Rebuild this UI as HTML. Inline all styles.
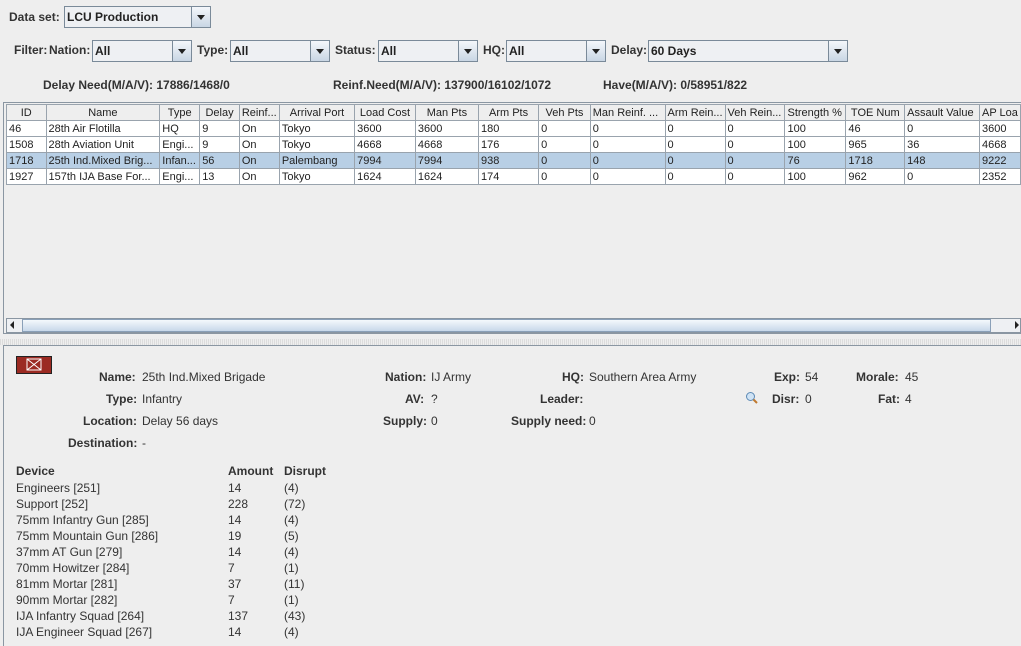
<!DOCTYPE html>
<html><head><meta charset="utf-8"><style>
*{margin:0;padding:0;box-sizing:border-box}
body{width:1021px;height:646px;background:#eeeeee;font-family:"Liberation Sans",sans-serif;position:relative;overflow:hidden;color:#222}
.a{position:absolute;white-space:nowrap}
.b{font-weight:bold;font-size:12px;color:#333}
.n{font-size:12px;color:#333}
.combo{position:absolute;height:22px;border:1px solid #7a8a99;background:#eef0f3;font-weight:bold;font-size:12px;padding:3px 0 0 2px;color:#222}
.combo .btn{position:absolute;right:0;top:0;width:19px;height:20px;border-left:1px solid #7a8a99;background:linear-gradient(#f4f7fb,#c9d6e4)}
.combo .btn:after{content:"";position:absolute;left:5px;top:8px;border-left:4px solid transparent;border-right:4px solid transparent;border-top:5px solid #222}
table{position:absolute;left:6px;top:104px;border-collapse:collapse;font-size:11px;table-layout:fixed}
td,th{border:1px solid #99a3ad;height:16px;padding:0 2px;overflow:hidden;white-space:nowrap;font-weight:normal;color:#222}
th{background:#eeeeee;text-align:center}
td{background:#fff}
tr.s td{background:#b8cfe5}
</style></head><body>
<div class="a b" style="left:9px;top:10px">Data set:</div>
<div class="combo" style="left:64px;top:6px;width:147px">LCU Production<div class="btn"></div></div>
<div class="a b" style="left:14px;top:43px">Filter:</div>
<div class="a b" style="left:49px;top:43px">Nation:</div>
<div class="combo" style="left:92px;top:40px;width:100px">All<div class="btn"></div></div>
<div class="a b" style="left:197px;top:43px">Type:</div>
<div class="combo" style="left:230px;top:40px;width:100px">All<div class="btn"></div></div>
<div class="a b" style="left:335px;top:43px">Status:</div>
<div class="combo" style="left:378px;top:40px;width:100px">All<div class="btn"></div></div>
<div class="a b" style="left:483px;top:43px">HQ:</div>
<div class="combo" style="left:506px;top:40px;width:100px">All<div class="btn"></div></div>
<div class="a b" style="left:611px;top:43px">Delay:</div>
<div class="combo" style="left:648px;top:40px;width:200px">60 Days<div class="btn"></div></div>
<div class="a b" style="left:43px;top:78px">Delay Need(M/A/V): 17886/1468/0</div>
<div class="a b" style="left:333px;top:78px">Reinf.Need(M/A/V): 137900/16102/1072</div>
<div class="a b" style="left:603px;top:78px">Have(M/A/V): 0/58951/822</div>
<div class="a" style="left:3px;top:102px;width:1018px;height:232px;border:1px solid #8a96a2;border-right:none"></div>
<table>
<colgroup><col style="width:40px"><col style="width:114px"><col style="width:40px"><col style="width:40px"><col style="width:40px"><col style="width:76px"><col style="width:61px"><col style="width:64px"><col style="width:61px"><col style="width:52px"><col style="width:75px"><col style="width:60px"><col style="width:60px"><col style="width:61px"><col style="width:59px"><col style="width:75px"><col style="width:40px"></colgroup>
<tr><th>ID</th><th>Name</th><th>Type</th><th>Delay</th><th style="text-align:left">Reinf...</th><th>Arrival Port</th><th>Load Cost</th><th>Man Pts</th><th>Arm Pts</th><th>Veh Pts</th><th style="text-align:left">Man Reinf. ...</th><th style="text-align:left">Arm Rein...</th><th style="text-align:left">Veh Rein...</th><th style="text-align:left">Strength %</th><th>TOE Num</th><th style="text-align:left">Assault Value</th><th style="text-align:left">AP Loa</th></tr>
<tr><td>46</td><td>28th Air Flotilla</td><td>HQ</td><td>9</td><td>On</td><td>Tokyo</td><td>3600</td><td>3600</td><td>180</td><td>0</td><td>0</td><td>0</td><td>0</td><td>100</td><td>46</td><td>0</td><td>3600</td></tr>
<tr><td>1508</td><td>28th Aviation Unit</td><td>Engi...</td><td>9</td><td>On</td><td>Tokyo</td><td>4668</td><td>4668</td><td>176</td><td>0</td><td>0</td><td>0</td><td>0</td><td>100</td><td>965</td><td>36</td><td>4668</td></tr>
<tr class="s"><td>1718</td><td>25th Ind.Mixed Brig...</td><td>Infan...</td><td>56</td><td>On</td><td>Palembang</td><td>7994</td><td>7994</td><td>938</td><td>0</td><td>0</td><td>0</td><td>0</td><td>76</td><td>1718</td><td>148</td><td>9222</td></tr>
<tr><td>1927</td><td>157th IJA Base For...</td><td>Engi...</td><td>13</td><td>On</td><td>Tokyo</td><td>1624</td><td>1624</td><td>174</td><td>0</td><td>0</td><td>0</td><td>0</td><td>100</td><td>962</td><td>0</td><td>2352</td></tr>
</table>
<div class="a" style="left:6px;top:318px;width:1015px;height:15px;border:1px solid #8a96a2;background:#eef0f3"></div>
<div class="a" style="left:22px;top:319px;width:969px;height:13px;border:1px solid #8aa0b8;background:linear-gradient(#f4f8fc,#c8d8ea)"></div>
<div class="a" style="left:10px;top:321px;border-top:4px solid transparent;border-bottom:4px solid transparent;border-right:4px solid #222"></div>
<div class="a" style="left:1015px;top:321px;border-top:4px solid transparent;border-bottom:4px solid transparent;border-left:4px solid #222"></div>
<div class="a" style="left:0;top:339px;width:1021px;height:6px;background:repeating-linear-gradient(90deg,#dcdcdc 0 1px,#eeeeee 1px 2px)"></div>
<div class="a" style="left:3px;top:345px;width:1018px;height:301px;border-left:1px solid #8a96a2;border-top:1px solid #8a96a2"></div>
<svg class="a" style="left:16px;top:356px" width="36" height="18"><rect x="0.5" y="0.5" width="35" height="17" fill="#9b2a22" stroke="#222"/><rect x="11" y="3" width="14" height="11" fill="none" stroke="#fff"/><path d="M11 3L25 14M25 3L11 14" stroke="#fff"/></svg>
<div class="a b" style="left:99px;top:370px">Name:</div><div class="a n" style="left:142px;top:370px">25th Ind.Mixed Brigade</div>
<div class="a b" style="left:106px;top:392px">Type:</div><div class="a n" style="left:142px;top:392px">Infantry</div>
<div class="a b" style="left:83px;top:414px">Location:</div><div class="a n" style="left:142px;top:414px">Delay 56 days</div>
<div class="a b" style="left:68px;top:436px">Destination:</div><div class="a n" style="left:142px;top:436px">-</div>
<div class="a b" style="left:385px;top:370px">Nation:</div><div class="a n" style="left:431px;top:370px">IJ Army</div>
<div class="a b" style="left:405px;top:392px">AV:</div><div class="a n" style="left:431px;top:392px">?</div>
<div class="a b" style="left:383px;top:414px">Supply:</div><div class="a n" style="left:431px;top:414px">0</div>
<div class="a b" style="left:562px;top:370px">HQ:</div><div class="a n" style="left:589px;top:370px">Southern Area Army</div>
<div class="a b" style="left:540px;top:392px">Leader:</div>
<div class="a b" style="left:511px;top:414px">Supply need:</div><div class="a n" style="left:589px;top:414px">0</div>
<div class="a b" style="left:774px;top:370px">Exp:</div><div class="a n" style="left:805px;top:370px">54</div>
<div class="a b" style="left:772px;top:392px">Disr:</div><div class="a n" style="left:805px;top:392px">0</div>
<svg class="a" style="left:745px;top:391px" width="14" height="14"><circle cx="5.5" cy="5.5" r="4" fill="#cfe3f5" stroke="#5d8ab5"/><path d="M8.5 8.5L12 12" stroke="#c07a30" stroke-width="2"/></svg>
<div class="a b" style="left:856px;top:370px">Morale:</div><div class="a n" style="left:905px;top:370px">45</div>
<div class="a b" style="left:878px;top:392px">Fat:</div><div class="a n" style="left:905px;top:392px">4</div>
<div class="a b" style="left:16px;top:464px">Device</div><div class="a b" style="left:228px;top:464px">Amount</div><div class="a b" style="left:284px;top:464px">Disrupt</div>
<div class="a n" style="left:16px;top:480px;line-height:16px">Engineers [251]<br>Support [252]<br>75mm Infantry Gun [285]<br>75mm Mountain Gun [286]<br>37mm AT Gun [279]<br>70mm Howitzer [284]<br>81mm Mortar [281]<br>90mm Mortar [282]<br>IJA Infantry Squad [264]<br>IJA Engineer Squad [267]</div>
<div class="a n" style="left:228px;top:480px;line-height:16px">14<br>228<br>14<br>19<br>14<br>7<br>37<br>7<br>137<br>14</div>
<div class="a n" style="left:284px;top:480px;line-height:16px">(4)<br>(72)<br>(4)<br>(5)<br>(4)<br>(1)<br>(11)<br>(1)<br>(43)<br>(4)</div>
</body></html>
